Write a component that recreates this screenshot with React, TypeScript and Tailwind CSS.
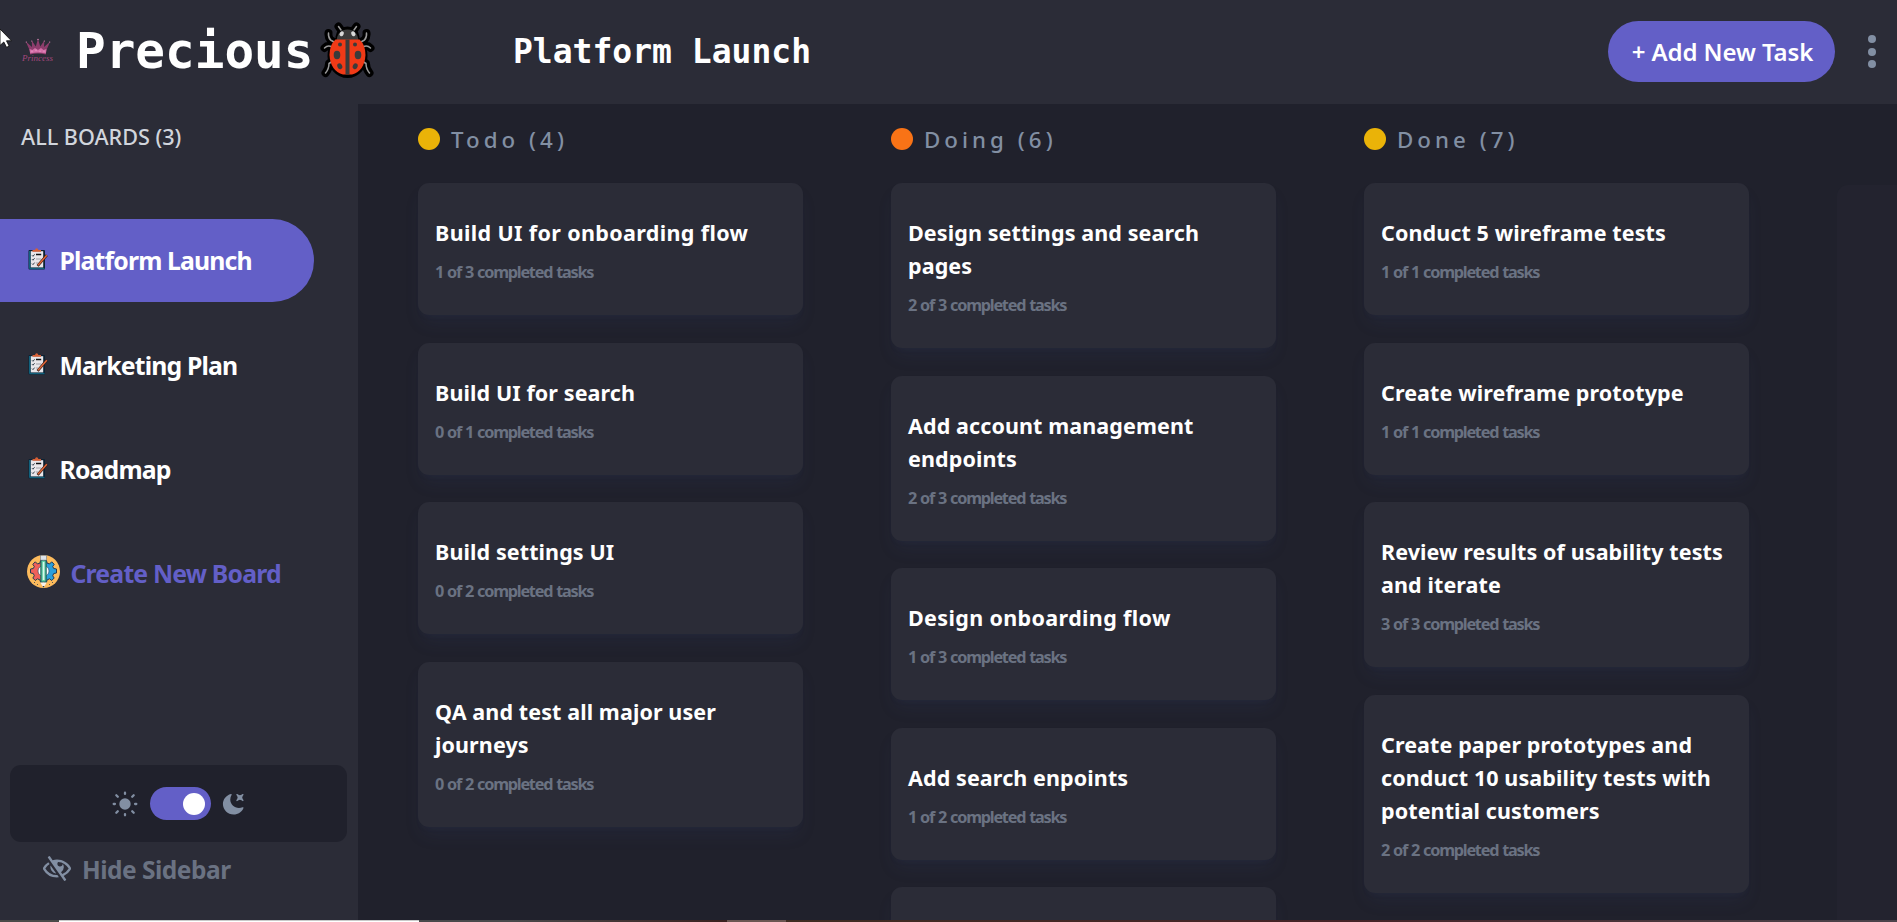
import React from "react";

type Task = { title: string; done: string; wide?: boolean };
type Column = { name: string; dot: string; tasks: Task[] };

const columns: Column[] = [
  {
    name: "Todo (4)",
    dot: "bg-[#eab308]",
    tasks: [
      { title: "Build UI for onboarding flow", done: "1 of 3 completed tasks", wide: true },
      { title: "Build UI for search", done: "0 of 1 completed tasks" },
      { title: "Build settings UI", done: "0 of 2 completed tasks" },
      { title: "QA and test all major user journeys", done: "0 of 2 completed tasks" },
    ],
  },
  {
    name: "Doing (6)",
    dot: "bg-[#f97316]",
    tasks: [
      { title: "Design settings and search pages", done: "2 of 3 completed tasks" },
      { title: "Add account management endpoints", done: "2 of 3 completed tasks" },
      { title: "Design onboarding flow", done: "1 of 3 completed tasks", wide: true },
      { title: "Add search enpoints", done: "1 of 2 completed tasks" },
      { title: "", done: "" },
    ],
  },
  {
    name: "Done (7)",
    dot: "bg-[#eab308]",
    tasks: [
      { title: "Conduct 5 wireframe tests", done: "1 of 1 completed tasks" },
      { title: "Create wireframe prototype", done: "1 of 1 completed tasks" },
      { title: "Review results of usability tests and iterate", done: "3 of 3 completed tasks" },
      {
        title: "Create paper prototypes and conduct 10 usability tests with potential customers",
        done: "2 of 2 completed tasks",
      },
    ],
  },
];

const boards = [
  { name: "Platform Launch", active: true },
  { name: "Marketing Plan", active: false },
  { name: "Roadmap", active: false },
];

function Crown() {
  return (
    <svg className="h-[18px] w-[26px]" viewBox="0 0 26 18">
      <path d="M4.5 12 L0.8 3.5 L7 9 L6.8 2.5 L10.8 8.5 L13 0.8 L15.2 8.5 L19.4 2.5 L19 9 L25.2 3.5 L21.5 12 L20.8 16.5 Q13 14.6 5.2 16.5 Z" fill="#8d3d6c" />
      <path d="M4.5 11 L7.5 12 L10 10 L13 12 L16 10 L18.5 12 L21.5 11 L20.8 15.5 Q13 13.6 5.2 15.5 Z" fill="#d56fa8" />
      <g fill="#e58fc0">
        <circle cx="7" cy="13.4" r="0.8" />
        <circle cx="11" cy="12.4" r="0.8" />
        <circle cx="15" cy="13.2" r="0.8" />
        <circle cx="19" cy="13.2" r="0.8" />
        <circle cx="13" cy="1.5" r="0.7" />
        <circle cx="1.3" cy="4" r="0.6" />
        <circle cx="24.7" cy="4" r="0.6" />
        <circle cx="6.8" cy="3" r="0.6" />
        <circle cx="19.3" cy="3" r="0.6" />
      </g>
    </svg>
  );
}

function Ladybug() {
  const legs =
    "M21 8 L18.500 4.500 M34 8 L36.500 4.500 M14 20 L10.500 18 Q8 15 8.500 11 M41 20 L44.500 18 Q47 15 46.500 11 M12 25 Q8 22.500 4.500 26 M43 25 Q47 22.500 50.500 26 M13 39 L9 41.500 Q9 47 5.500 51 M42 39 L46 41.500 Q46 47 49.500 51";
  return (
    <svg className="-mt-[3px] h-[57px] w-[55px]" viewBox="0 0 55 57">
      <g stroke="#000" strokeLinecap="round" strokeLinejoin="round" fill="none">
        <path d={legs} strokeWidth="8" />
        <ellipse cx="27.500" cy="34" rx="17.500" ry="19.500" fill="#000" strokeWidth="5" />
        <path d="M19 15 Q20 8 27.500 8 Q35 8 36 15 Z" fill="#000" strokeWidth="7" />
        <path d={legs} stroke="#9a9a9a" strokeWidth="1.500" />
      </g>
      <path d="M16.500 19 Q17.500 7.500 27.500 7.500 Q37.500 7.500 38.500 19 Z" fill="#3b3b3b" />
      <path d="M15.500 17.500 H39.500 Q45.500 23 45.500 33 Q44.500 49 32 52.500 H23 Q10.500 49 9.500 33 Q9.500 23 15.500 17.500 Z" fill="#f03a17" />
      <rect x="25.500" y="17.500" width="4" height="35" fill="#3b3b3b" />
      <g fill="#3b3b3b">
        <circle cx="20" cy="22.500" r="2" />
        <circle cx="35" cy="22.500" r="2" />
        <ellipse cx="17" cy="33" rx="3.300" ry="4.200" />
        <ellipse cx="38" cy="33" rx="3.300" ry="4.200" />
        <ellipse cx="19.800" cy="44.200" rx="2.400" ry="3" transform="rotate(-25 19.800 44.200)" />
        <ellipse cx="35.200" cy="44.200" rx="2.400" ry="3" transform="rotate(25 35.200 44.200)" />
      </g>
      <g fill="#d9d9d9">
        <ellipse cx="21.700" cy="11.800" rx="2" ry="2.600" transform="rotate(30 21.700 11.800)" />
        <ellipse cx="33.300" cy="11.800" rx="2" ry="2.600" transform="rotate(-30 33.300 11.800)" />
      </g>
    </svg>
  );
}

function Clipboard() {
  return (
    <svg className="-mt-[3px] h-[22px] w-[20px] shrink-0" viewBox="0 0 20 22">
      <rect x="0.500" y="2" width="16.500" height="19.500" rx="1" fill="#0b2233" />
      <rect x="1" y="3" width="1.500" height="17.500" fill="#12617c" />
      <rect x="1.500" y="19.800" width="15" height="1.400" fill="#12617c" />
      <rect x="2.800" y="3.200" width="12.400" height="16.200" fill="#e9e6ea" />
      <path d="M4.500 3.700 V2 H7 Q7.300 0.300 8.700 0.300 Q10.100 0.300 10.400 2 H13 V3.700 Z" fill="#d75f35" />
      <path d="M4 7.300 l1 1 l1.600 -2 M4 11.200 l1 1 l1.600 -2 M4 15.600 l1 1 l1.600 -2" fill="none" stroke="#22303c" strokeWidth="0.900" />
      <path d="M8 6.500 H13.200" stroke="#111" strokeWidth="1.500" />
      <path d="M8 11 H13 M8 15 H10" stroke="#9a9aa2" strokeWidth="0.900" />
      <path d="M18.800 7.200 L9.600 17.800" stroke="#31170f" strokeWidth="2.600" />
      <path d="M18.800 7.200 L10 17.300" stroke="#e2683b" strokeWidth="1.500" />
    </svg>
  );
}

function DesignBadge() {
  return (
    <svg className="-mt-[5px] h-[33px] w-[33px] shrink-0" viewBox="0 0 33 33">
      <circle cx="16.500" cy="16.500" r="16.500" fill="#fdbb5c" />
      <g strokeLinejoin="round" stroke="#223a55" strokeWidth="1">
        <path d="M16 5.500 H13.500 L13 8 L10.500 9 L8.300 6.800 L5.800 9.300 L7.300 11.500 L6.300 13.500 L3.500 14 V18 L6.300 18.500 L7.300 20.800 L5.800 23 L8.300 25.500 L10.500 23.800 L13 25 L13.500 27 H16 V20 A4 4 0 0 1 16 12 Z" fill="#f0605a" />
        <path d="M17 5.500 H19.500 L20 8 L22.500 9 L24.700 6.800 L27.200 9.300 L25.700 11.500 L26.700 13.500 L29.500 14 V18 L26.700 18.500 L25.700 20.800 L27.200 23 L24.700 25.500 L22.500 23.800 L20 25 L19.500 27 H17 V20 A4 4 0 0 0 17 12 Z" fill="#2b9fdb" />
      </g>
      <circle cx="16.500" cy="16" r="5.500" fill="#fff" stroke="#223a55" strokeWidth="0.600" />
      <rect x="13.300" y="5.500" width="6.400" height="22" fill="#1d5f5c" />
      <rect x="14.500" y="5.500" width="4" height="21" fill="#5fd0a5" />
      <rect x="15.800" y="7" width="1.600" height="18" fill="#d9f6ea" />
      <rect x="13.500" y="0.500" width="6" height="4.600" fill="#dce3ea" stroke="#5a6b7c" strokeWidth="0.500" />
      <path d="M13.300 27.500 H19.700 L16.500 32.800 Z" fill="#f7f3ee" />
      <path d="M15.500 31 H17.500 L16.500 32.800 Z" fill="#223a55" />
      <path d="M7 27.500 h1 M10 29.500 h1 M22 29.500 h1 M25 27.500 h1" stroke="#5c5a4d" strokeWidth="1.200" />
    </svg>
  );
}

function Sun() {
  return (
    <svg className="size-[26px]" viewBox="0 0 26 26">
      <circle cx="13" cy="13" r="5.700" fill="#828fa3" />
      <path
        d="M13 1.700v1.200M13 23.100v1.200M1.700 13h1.200M23.100 13h1.200M4.300 4.300l1.500 1.500M20.200 20.200l1.500 1.500M21.700 4.300l-1.500 1.500M5.800 20.200l-1.500 1.500"
        stroke="#828fa3"
        strokeWidth="2.300"
        strokeLinecap="round"
      />
    </svg>
  );
}

function Moon() {
  return (
    <svg className="size-[22px]" viewBox="0 0 16 16" fill="#828fa3">
      <path d="M6.474.682c.434-.11.718.406.481.78A6.067 6.067 0 0 0 6.010 4.720c0 3.418 2.827 6.187 6.314 6.187.89.002 1.770-.182 2.584-.54.408-.18.894.165.724.57-1.160 2.775-3.944 4.730-7.194 4.730-4.292 0-7.771-3.410-7.771-7.615 0-3.541 2.466-6.518 5.807-7.370Zm8.433.070c.442-.294.969.232.674.674l-.525.787a1.943 1.943 0 0 0 0 2.157l.525.788c.295.441-.232.968-.674.673l-.787-.525a1.943 1.943 0 0 0-2.157 0l-.786.525c-.442.295-.970-.232-.675-.673l.525-.788a1.943 1.943 0 0 0 0-2.157l-.525-.787c-.295-.442.232-.968.674-.673l.787.525a1.943 1.943 0 0 0 2.157 0Z" />
    </svg>
  );
}

function EyeOff() {
  return (
    <svg className="-mt-0.5 h-[25px] w-[28px]" viewBox="0 0 18 16" fill="#828fa3">
      <path d="M8.522 11.223a4.252 4.252 0 0 1-3.654-5.220l3.654 5.220ZM9 12.250A8.685 8.685 0 0 1 1.500 8a8.612 8.612 0 0 1 2.760-2.864l-.86-1.230A10.112 10.112 0 0 0 .208 7.238a1.500 1.500 0 0 0 0 1.524A10.187 10.187 0 0 0 9 13.750c.414 0 .828-.025 1.239-.074l-1-1.430A8.880 8.880 0 0 1 9 12.250Zm8.792-3.488a10.140 10.140 0 0 1-4.486 4.046l1.504 2.148a.375.375 0 0 1-.092.523l-.648.453a.375.375 0 0 1-.523-.092L3.190 1.044A.375.375 0 0 1 3.282.520L3.930.068a.375.375 0 0 1 .523.092l1.735 2.479A10.308 10.308 0 0 1 9 2.250c3.746 0 7.031 2 8.792 4.988a1.500 1.500 0 0 1 0 1.524ZM16.500 8a8.674 8.674 0 0 0-6.755-4.219A1.750 1.750 0 1 0 12.750 5v-.001a4.250 4.250 0 0 1-1.154 5.366l.834 1.192A8.641 8.641 0 0 0 16.500 8Z" />
    </svg>
  );
}

function Cursor() {
  return (
    <svg className="absolute left-0 top-[28px] h-[21px] w-[13px]" viewBox="0 0 13 21">
      <path d="M0 1 L11.500 12.800 H6.500 L9.200 18.200 L6.500 19.300 L3.800 14 L0 17.500 Z" fill="#fff" stroke="#111" strokeWidth="0.900" />
    </svg>
  );
}

function Header() {
  return (
    <header className="flex h-[104px] shrink-0 items-center bg-[#2b2c37] text-white">
      <div className="-mt-[3px] ml-[22px] flex w-[31px] flex-col items-center">
        <Crown />
        <span className="-mt-[2px] font-['Liberation_Serif',serif] text-[9px] italic leading-[9px] text-[#a3477c]">Princess</span>
      </div>
      <div className="ml-[23px] flex w-[244px] items-center">
        <span className="-mt-[3px] font-['DejaVu_Sans_Mono',monospace] text-[49.3px] font-bold leading-[60px]">Precious</span>
      </div>
      <Ladybug />
      <h1 className="-mt-px ml-[138px] font-['DejaVu_Sans_Mono',monospace] text-[33px] font-bold leading-[40px]">
        Platform Launch
      </h1>
      <button className="-mt-[2px] ml-auto flex h-[61px] w-[227px] items-center justify-center rounded-full bg-[#635fc7] pl-0.5 pt-0.5 text-[24px] font-semibold tracking-[-0.1px]">
        + Add New Task
      </button>
      <div className="-mt-px ml-[33px] mr-[21px] flex flex-col gap-[4.5px]">
        <i className="size-2 rounded-full bg-[#828fa3]" />
        <i className="size-2 rounded-full bg-[#828fa3]" />
        <i className="size-2 rounded-full bg-[#828fa3]" />
      </div>
    </header>
  );
}

function Sidebar() {
  return (
    <aside className="flex w-[358px] shrink-0 flex-col bg-[#2b2c37] text-white">
      <p className="mt-[17px] h-8 pl-[21px] text-[21.6px] font-medium leading-8 text-gray-300">ALL BOARDS (3)</p>
      <nav className="mt-[66px] flex w-[314px] flex-col gap-[21.500px]">
        {boards.map((b) => (
          <a
            key={b.name}
            className={`flex h-[83px] items-center gap-[11.5px] rounded-r-full pl-7 text-[24.8px] font-bold tracking-[-0.85px] ${
              b.active ? "bg-[#635fc7]" : ""
            }`}
          >
            <Clipboard />
            <span className="mt-px">{b.name}</span>
          </a>
        ))}
        <a className="flex h-[83px] items-center gap-[10.5px] pl-[27px] text-[24.8px] font-bold tracking-[-0.82px] text-[#635fc7]">
          <DesignBadge />
          <span>Create New Board</span>
        </a>
      </nav>
      <div className="mx-2.5 mt-auto flex h-[77px] w-[337px] items-center rounded-[11px] bg-[#20212c] pl-[102px]">
        <Sun />
        <div className="ml-3 flex h-[33px] w-[61px] items-center justify-end rounded-full bg-[#635fc7] pr-1.5">
          <i className="size-[22px] rounded-full bg-white" />
        </div>
        <div className="ml-[11px]">
          <Moon />
        </div>
      </div>
      <div className="mb-[33px] mt-[9px] flex h-9 items-center gap-[11px] pl-[43px] text-[24.500px] font-bold tracking-[-0.5px] text-gray-500">
        <EyeOff />
        <span className="mt-0.5">Hide Sidebar</span>
      </div>
    </aside>
  );
}

function Card({ task }: { task: Task }) {
  return (
    <article className="min-h-[132px] shrink-0 rounded-[11px] bg-[#2b2c37] px-[17px] pb-[31px] pt-[33px] shadow-[0_11px_17px_-3px_#364e7e1f,0_4px_7px_-4px_#364e7e1f]">
      <h3
        className={`text-[21.5px] font-bold leading-[33px] text-white ${
          task.wide ? "tracking-[0.36px]" : "tracking-[0.1px]"
        }`}
      >
        {task.title}
      </h3>
      <p className="mt-[11px] text-[16.3px] font-bold leading-6 tracking-[-1.25px] text-gray-500 [word-spacing:1px]">
        {task.done}
      </p>
    </article>
  );
}

export default function App() {
  return (
    <div className="relative flex h-[922px] w-[1897px] flex-col overflow-hidden bg-[#20212c] font-['Noto_Sans',sans-serif]">
      <Header />
      <div className="flex min-h-0 flex-1">
        <Sidebar />
        <main className="flex min-w-0 flex-1 gap-[88px] overflow-hidden pl-[60px] pt-[17px]">
          {columns.map((c) => (
            <section key={c.name} className="w-[385px] shrink-0">
              <div className="flex h-9 items-center gap-[11px]">
                <i className={`size-[22px] rounded-full ${c.dot}`} />
                <span className="mt-0.5 text-[22.3px] font-medium leading-9 tracking-[4.05px] text-[#828fa3]">{c.name}</span>
              </div>
              <div className="mt-[26px] flex flex-col gap-[27.5px]">
                {c.tasks.map((t, i) => (
                  <Card key={i} task={t} />
                ))}
              </div>
            </section>
          ))}
          <div className="mt-16 h-[900px] w-[300px] shrink-0 rounded-[11px] bg-[#2b2c3740]" />
        </main>
      </div>
      <div className="flex h-0.5 shrink-0">
        <div className="w-[59px] bg-[#4a4a48]" />
        <div className="w-[360px] border-t border-[#c9c9c9] bg-white" />
        <div className="w-[308px] bg-linear-to-r from-[#49494b] from-30% to-[#3a211f]" />
        <div className="w-[59px] bg-[#6b5652]" />
        <div className="flex-1 bg-linear-to-r from-[#3f2c22] via-[#452226] to-[#4b434b]" />
      </div>
      <Cursor />
    </div>
  );
}
